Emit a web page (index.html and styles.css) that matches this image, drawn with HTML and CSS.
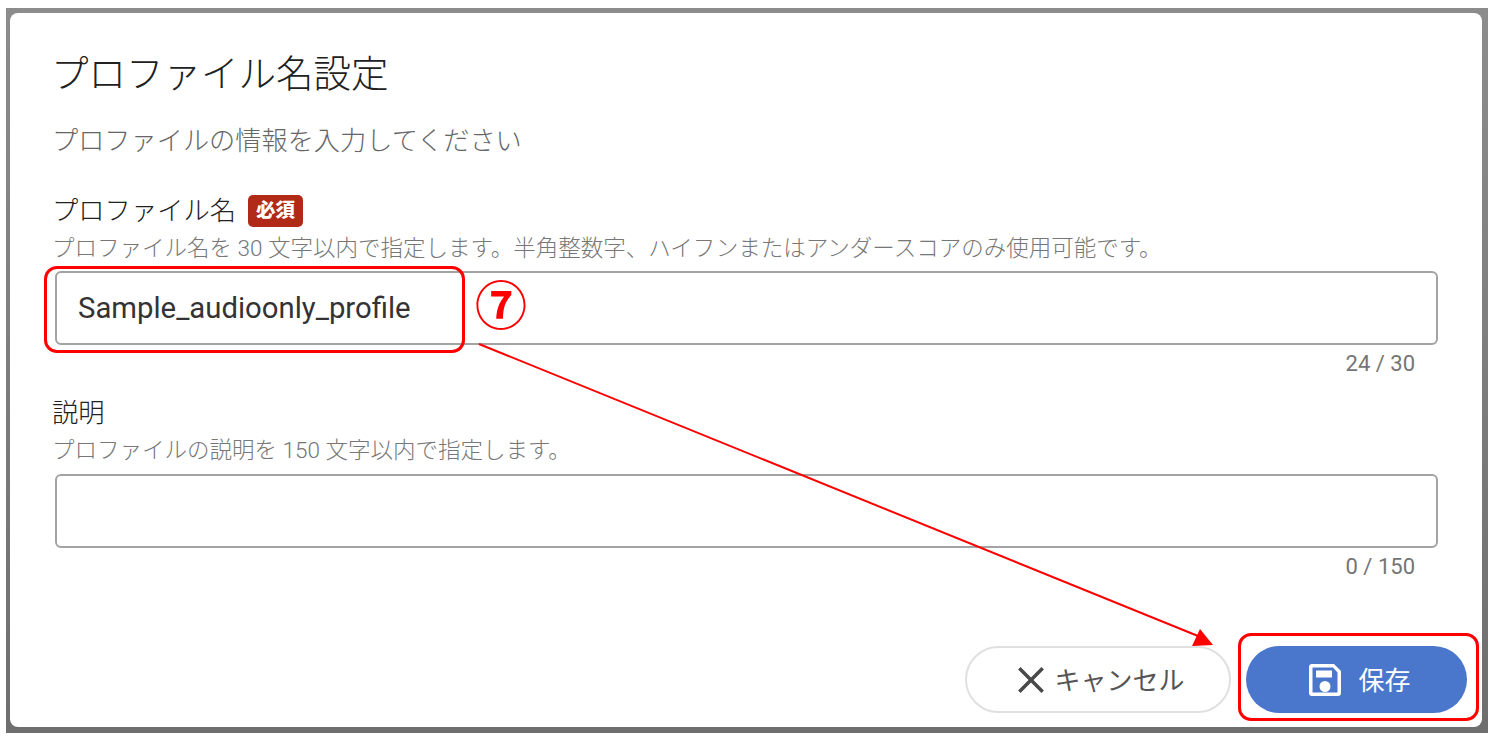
FILE: index.html
```html
<!DOCTYPE html>
<html lang="ja">
  <head>
    <meta charset="utf-8" />
    <title>プロファイル名設定</title>
    <link rel="stylesheet" href="styles.css">
  </head>
  <body>
    <div class="backdrop">
      <main class="dialog">
        <h1 class="dialog-title">プロファイル名設定</h1>
        <p class="dialog-subtitle">プロファイルの情報を入力してください</p>

        <div class="field field-name">
          <div class="field-label">プロファイル名 <span class="badge">必須</span></div>
          <div class="field-hint">プロファイル名を 30 文字以内で指定します。半角整数字、ハイフンまたはアンダースコアのみ使用可能です。</div>
          <div class="field-box">Sample_audioonly_profile</div>
          <div class="field-count">24 / 30</div>
        </div>

        <div class="field field-desc">
          <div class="field-label">説明</div>
          <div class="field-hint">プロファイルの説明を 150 文字以内で指定します。</div>
          <div class="field-box"></div>
          <div class="field-count">0 / 150</div>
        </div>

        <div class="actions">
          <button class="btn btn-cancel">
            <svg class="btn-icon" viewBox="0 0 24 24"><path d="M2 2 22 22M22 2 2 22" fill="none" stroke="#484848" stroke-width="3"/></svg>
            キャンセル
          </button>
          <button class="btn btn-save">
            <svg class="btn-icon-save" viewBox="0 0 34 34"><path fill-rule="evenodd" fill="#fff" d="M4 1h22l7 7v22a3 3 0 0 1-3 3H4a3 3 0 0 1-3-3V4a3 3 0 0 1 3-3zM4.500 4.500v25h25V9.500l-4.500-5zM8 7.500h16v7H8zM17 18a5.500 5.500 0 1 1 0 11 5.500 5.500 0 0 1 0-11z"/></svg>
            保存
          </button>
        </div>
      </main>
    </div>

    <!-- annotations drawn on top of the screenshot -->
    <div class="mark mark-input"></div>
    <div class="mark mark-save"></div>
    <div class="mark-number">⑦</div>
    <svg class="mark-arrow" viewBox="0 0 1490 739">
      <path d="M479 344 1198 636" stroke="#f00" stroke-width="2" fill="none"/>
      <path d="M1213 645 1192 646 1200 629z" fill="#f00"/>
    </svg>
  </body>
</html>
```

FILE: styles.css
```css
html, body {
  margin: 0;
  height: 739px;
  overflow: hidden;
  background: #fff;
}
body {
  position: relative;
  padding: 8px 2px 6px 6px;
  box-sizing: border-box;
  font-family: Roboto, "Noto Sans CJK JP", sans-serif;
  color: #212121;
}
.backdrop {
  height: 100%;
  padding: 5px 6px 6px 4px;
  box-sizing: border-box;
  background: linear-gradient(#8c8c8c, #6e6e6e);
}
.dialog {
  height: 100%;
  padding: 0 44px 0 44px;
  box-sizing: border-box;
  background: #fff;
  border-radius: 8px;
  display: flex;
  flex-direction: column;
}
.dialog-title {
  margin: 34px 0 0 -3px;
  font-size: 37.500px;
  line-height: 54px;
  font-weight: 300;
}
.dialog-subtitle {
  margin: 21px 0 0 -2px;
  font-size: 26.200px;
  line-height: 38px;
  font-weight: 300;
  color: #666;
}
.field-name {
  margin-top: 32px;
}
.field-desc {
  margin-top: 12px;
}
.field-label {
  display: flex;
  align-items: center;
  gap: 12px;
  margin-left: -2px;
  font-size: 26.300px;
  line-height: 38px;
  font-weight: 300;
}
.badge {
  padding: 0 8px;
  font-size: 19.500px;
  line-height: 32px;
  font-weight: 900;
  color: #fff;
  background: #b02a17;
  border-radius: 5px;
}
.field-hint {
  margin: 3px 0 0 -2px;
  font-size: 22.500px;
  line-height: 30px;
  font-weight: 300;
  color: #777;
}
.field-box {
  margin: 8px 0 0 1px;
  height: 74px;
  padding: 0 21px;
  box-sizing: border-box;
  border: 2px solid #a3a3a3;
  border-radius: 6px;
  font-size: 29.300px;
  line-height: 70px;
  color: #333;
}
.field-desc .field-box {
  margin-top: 9px;
}
.field-count {
  margin-top: 1px;
  padding-right: 23px;
  text-align: right;
  font-size: 22px;
  line-height: 36px;
  color: #757575;
}
.actions {
  margin-top: auto;
  margin-bottom: 14px;
  margin-right: -29px;
  display: flex;
  justify-content: flex-end;
  gap: 15px;
}
.btn {
  height: 67px;
  padding: 0 0 3px 6px;
  display: flex;
  align-items: center;
  justify-content: center;
  border-radius: 34px;
  font-family: inherit;
  font-size: 26px;
  font-weight: 400;
}
.btn-cancel {
  width: 266px;
  gap: 9px;
  background: #fff;
  border: 2px solid #e0e0e0;
  color: #555;
}
.btn-save {
  width: 221px;
  gap: 16px;
  background: #4a77cc;
  border: 0;
  color: #fff;
}
.btn-icon {
  width: 28px;
  height: 28px;
  margin-top: 3px;
}
.btn-icon-save {
  width: 34px;
  height: 34px;
  margin-top: 3px;
}
.mark {
  position: absolute;
  box-sizing: border-box;
  border: 3px solid #f00;
  border-radius: 13px;
}
.mark-input {
  left: 44px;
  top: 266px;
  width: 421px;
  height: 87px;
}
.mark-save {
  left: 1238px;
  top: 633px;
  width: 241px;
  height: 88px;
}
.mark-number {
  position: absolute;
  left: 475px;
  top: 267px;
  font-size: 52px;
  line-height: 72px;
  font-weight: 700;
  font-family: "Noto Sans CJK JP", sans-serif;
  color: #f00;
}
.mark-arrow {
  position: absolute;
  left: 0;
  top: 0;
  width: 1490px;
  height: 739px;
}
```
